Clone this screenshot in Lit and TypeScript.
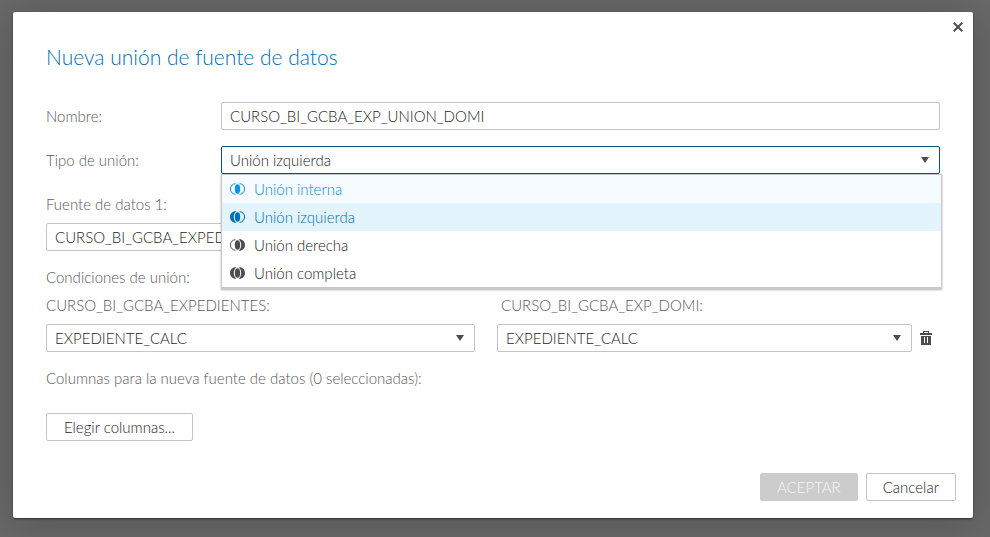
import { LitElement, html, css, svg } from "lit";
import { customElement, property, state } from "lit/decorators.js";
import { classMap } from "lit/directives/class-map.js";

type JoinKind = "inner" | "left" | "right" | "full";

interface JoinOption {
  kind: JoinKind;
  label: string;
}

const JOIN_OPTIONS: JoinOption[] = [
  { kind: "inner", label: "Unión interna" },
  { kind: "left", label: "Unión izquierda" },
  { kind: "right", label: "Unión derecha" },
  { kind: "full", label: "Unión completa" },
];

const LEFT_MOON = "M5.400 .2C2.400 .2 0 2.800 0 6s2.400 5.800 5.400 5.800c.3 0 .6 0 .9-.1C4.700 10.300 3.800 8.300 3.800 6S4.700 1.700 6.300.3C6 .2 5.700.2 5.400.2z";
const RIGHT_MOON = "M9.600 .2C12.600 .2 15 2.800 15 6s-2.400 5.800-5.400 5.800c-.3 0-.6 0-.9-.1C10.300 10.300 11.200 8.300 11.200 6S10.300 1.700 8.700.3C9 .2 9.300.2 9.600.2z";

@customElement("join-icon")
export class JoinIcon extends LitElement {
  @property() kind: JoinKind = "inner";

  static styles = css`
    :host { display: block; width: 15px; height: 12px; }
    .glyph { display: block; width: 100%; height: 100%; }
    .solid { fill: currentColor; }
    .thin { fill: none; stroke: currentColor; stroke-width: 1; }
  `;

  render() {
    const k = this.kind;
    const leftSolid = k === "left" || k === "full";
    const rightSolid = k === "right" || k === "full";
    return html`<svg class="glyph" viewBox="0 0 15 12" aria-hidden="true">
      ${leftSolid
        ? svg`<path class="solid" d=${LEFT_MOON}></path>`
        : svg`<path class="thin" d="M5.500 .7A5.100 5.300 0 0 0 5.500 11.300"></path>`}
      ${rightSolid
        ? svg`<path class="solid" d=${RIGHT_MOON}></path>`
        : svg`<path class="thin" d="M9.500 .7A5.100 5.300 0 0 1 9.500 11.300"></path>`}
      <ellipse class="solid" cx="7.5" cy="6" rx="2.700" ry="4.700"></ellipse>
    </svg>`;
  }
}

@customElement("app-root")
export class AppRoot extends LitElement {
  @state() private selected: JoinKind = "left";
  @state() private hovered: JoinKind | null = "inner";

  static styles = css`
    :host {
      display: block;
      box-sizing: border-box;
      min-height: 100vh;
      padding: 12px 17px 19px 13px;
      background: #686868;
      color: #4d4d4d;
      font: 300 15px/20px Lato, "Liberation Sans", sans-serif;
    }
    * { box-sizing: border-box; }
    .dialog {
      position: relative;
      display: flex;
      flex-direction: column;
      min-height: calc(100vh - 31px);
      padding: 31px 33px 17px;
      border-radius: 2px;
      background: #fff;
      box-shadow: 0 1px 2px rgba(0, 0, 0, 0.5), 0 4px 40px rgba(0, 0, 0, 0.2);
    }
    .title {
      margin: 0 0 31px;
      color: #0070b4;
      font-size: 21px;
      font-weight: 300;
      line-height: 28px;
    }
    .row {
      display: grid;
      grid-template-columns: 175px 1fr;
      align-items: center;
      margin-bottom: 16px;
    }
    .label { color: #595959; }
    .source-label { margin-top: 4px; }
    .field {
      display: block;
      width: 100%;
      height: 28px;
      margin: 0;
      padding: 0 8px;
      border: 1px solid #c4c4c4;
      border-radius: 2px;
      background: #fff;
      color: #262626;
      font: inherit;
      appearance: none;
      outline: none;
    }
    .combo { position: relative; }
    .combo.open .field { border-color: #045582; }
    .arrow {
      position: absolute;
      top: 11px;
      right: 11px;
      width: 8px;
      height: 6px;
      fill: #4d4d4d;
      pointer-events: none;
    }
    .menu {
      position: absolute;
      z-index: 1;
      top: 100%;
      left: 0;
      right: -2px;
      margin: 0;
      padding: 0;
      border: 1px solid #c8c8c8;
      border-bottom-width: 2px;
      background: #fff;
      box-shadow: 0 1px 2px rgba(0, 0, 0, 0.3);
      list-style: none;
    }
    .option {
      display: flex;
      align-items: center;
      gap: 9px;
      height: 28px;
      padding: 0 8px;
      cursor: pointer;
    }
    .option-text { color: #262626; }
    .option.hovered { background: #f5fbff; color: #0a94e0; }
    .option.selected { background: #e3f4fd; color: #0070b4; }
    .hovered .option-text { color: #008fe0; }
    .selected .option-text { color: #0070b4; }
    .pair {
      display: grid;
      grid-template-columns: 429fr 443fr;
      column-gap: 22px;
      align-items: center;
    }
    .source { margin: 9px 0 16px; }
    .conditions { row-gap: 9px; margin: 8px 0 16px; }
    .second { padding-left: 4px; }
    .with-action { display: flex; align-items: center; gap: 8px; }
    .with-action .combo { flex: 1; }
    .icon-button {
      display: grid;
      place-items: center;
      margin: 0;
      padding: 0;
      border: 0;
      background: none;
      color: #4d4d4d;
    }
    .trash { margin-right: 8px; }
    .trash-icon { display: block; width: 12px; height: 14px; fill: currentColor; }
    .close { position: absolute; top: 10px; right: 10px; }
    .close-icon { display: block; width: 10px; height: 10px; fill: none; stroke: currentColor; stroke-width: 2; }
    .button {
      height: 28px;
      margin: 0;
      padding: 0 16px;
      border: 1px solid #c4c4c4;
      border-radius: 2px;
      background: #fff;
      color: #262626;
      font: inherit;
    }
    .choose { align-self: flex-start; min-width: 147px; margin-top: 25px; }
    .button:disabled { border-color: #ccc; background: #ccc; color: #f5f5f5; }
    .footer {
      display: flex;
      justify-content: flex-end;
      gap: 8px;
      margin: auto -16px 0 0;
    }
  `;

  private arrow() {
    return html`<svg class="arrow" viewBox="0 0 8 6" aria-hidden="true"><path d="M0 0h8L4 6z"></path></svg>`;
  }

  private select(id: string, value: string) {
    return html`<div class="combo">
      <select class="field" id=${id}><option>${value}</option></select>
      ${this.arrow()}
    </div>`;
  }

  render() {
    return html`
      <section class="dialog" role="dialog" aria-labelledby="title">
        <button class="icon-button close" aria-label="Cerrar">
          <svg class="close-icon" viewBox="0 0 10 10"><path d="M.7 .7l8.600 8.600M9.300 .7L.7 9.300"></path></svg>
        </button>
        <h1 class="title" id="title">Nueva unión de fuente de datos</h1>

        <div class="row">
          <label class="label" for="name">Nombre:</label>
          <input class="field" id="name" type="text" .value=${"CURSO_BI_GCBA_EXP_UNION_DOMI"} />
        </div>

        <div class="row">
          <label class="label" for="join">Tipo de unión:</label>
          <div class="combo open">
            <select
              class="field"
              id="join"
              @change=${(e: Event) => (this.selected = (e.target as HTMLSelectElement).value as JoinKind)}
            >
              ${JOIN_OPTIONS.map(
                (o) => html`<option value=${o.kind} ?selected=${o.kind === this.selected}>${o.label}</option>`
              )}
            </select>
            ${this.arrow()}
            <ul class="menu" role="listbox" aria-label="Tipo de unión">
              ${JOIN_OPTIONS.map(
                (o) => html`<li
                  class=${classMap({
                    option: true,
                    hovered: o.kind === this.hovered,
                    selected: o.kind === this.selected,
                  })}
                  role="option"
                  aria-selected=${o.kind === this.selected}
                  @mouseenter=${() => (this.hovered = o.kind)}
                  @click=${() => (this.selected = o.kind)}
                >
                  <join-icon .kind=${o.kind}></join-icon><span class="option-text">${o.label}</span>
                </li>`
              )}
            </ul>
          </div>
        </div>

        <label class="label source-label" for="source-1">Fuente de datos 1:</label>
        <div class="pair source">${this.select("source-1", "CURSO_BI_GCBA_EXPEDIENTES")}</div>

        <span class="label">Condiciones de unión:</span>
        <div class="pair conditions">
          <label class="label" for="left-column">CURSO_BI_GCBA_EXPEDIENTES:</label>
          <label class="label second" for="right-column">CURSO_BI_GCBA_EXP_DOMI:</label>
          ${this.select("left-column", "EXPEDIENTE_CALC")}
          <div class="with-action">
            ${this.select("right-column", "EXPEDIENTE_CALC")}
            <button class="icon-button trash" aria-label="Eliminar condición">
              <svg class="trash-icon" viewBox="0 0 12 14">
                <path fill-rule="evenodd" d="M3 0h6v2h3v2H0V2h3zM4 1v1h4V1zM1 5h10v9H1zM4 6v6h1V6zM7 6v6h1V6z"></path>
              </svg>
            </button>
          </div>
        </div>

        <span class="label">Columnas para la nueva fuente de datos (0 seleccionadas):</span>
        <button class="button choose">Elegir columnas...</button>

        <footer class="footer">
          <button class="button" disabled>ACEPTAR</button>
          <button class="button">Cancelar</button>
        </footer>
      </section>
    `;
  }
}
